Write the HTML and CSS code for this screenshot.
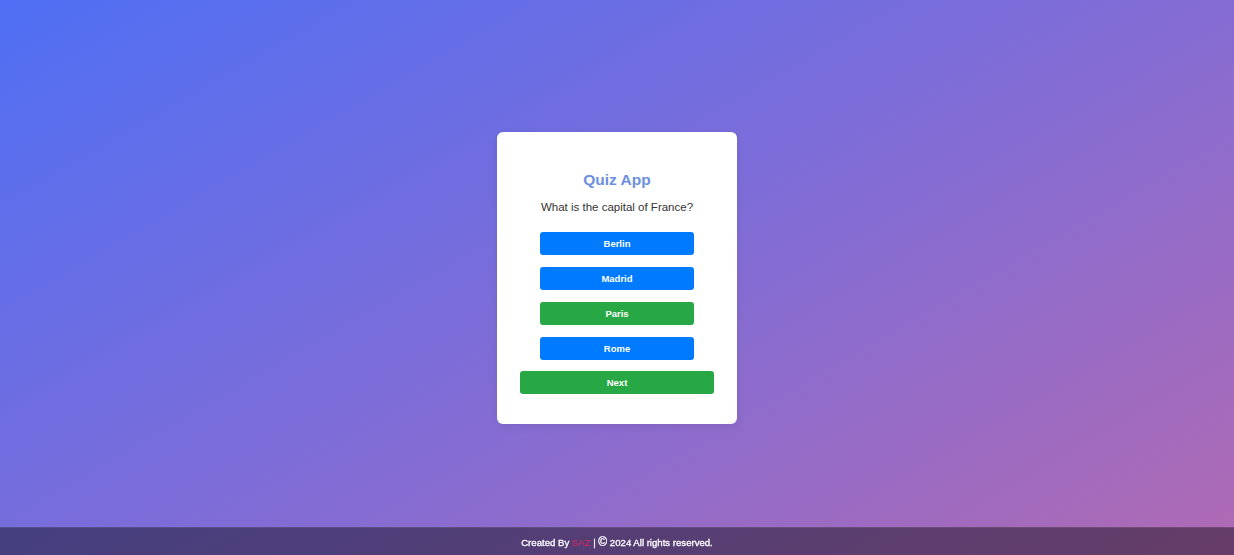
FILE: index.html
```html
<!DOCTYPE html>
<html lang="en">
<head>
<meta charset="UTF-8">
<title>Quiz App</title>
<link rel="stylesheet" href="styles.css">
</head>
<body>
<main class="page">
  <div class="card">
    <h1 class="title">Quiz App</h1>
    <p class="question">What is the capital of France?</p>
    <div class="options">
      <button class="option">Berlin</button>
      <button class="option">Madrid</button>
      <button class="option correct">Paris</button>
      <button class="option">Rome</button>
    </div>
    <button class="next">Next</button>
  </div>
</main>
<footer class="footer">
  Created By <span class="author">SAZ</span> | <span class="copy">©</span> 2024 All rights reserved.
</footer>
</body>
</html>
```

FILE: styles.css
```css
* { box-sizing: border-box; }
html, body { margin: 0; height: 100%; }
body {
  font-family: "Liberation Sans", Arial, sans-serif;
  background: linear-gradient(150deg, #4f6ff4 0%, #7a6ddb 45%, #b06ab3 100%);
  min-height: 555px;
}
.page {
  height: 555px;
  display: flex;
  align-items: center;
  justify-content: center;
}
.card {
  width: 240px;
  background: #fff;
  border-radius: 6px;
  padding: 38px 23px 30px;
  display: flex;
  flex-direction: column;
  align-items: center;
  box-shadow: 0 2px 8px rgba(0,0,0,0.08);
}
.title {
  margin: 0;
  font-size: 15.5px;
  font-weight: bold;
  color: #6c8fe0;
  line-height: 20px;
}
.question {
  margin: 9px 0 17px;
  font-size: 11.5px;
  color: #333;
  line-height: 16px;
}
.options {
  display: flex;
  flex-direction: column;
  gap: 12px;
  width: 154px;
}
.option, .next {
  border: none;
  border-radius: 3px;
  color: #fff;
  font-family: "Liberation Sans", Arial, sans-serif;
  font-size: 9.5px;
  font-weight: bold;
  height: 23px;
  padding: 0;
  background: #007bff;
}
.option.correct, .next { background: #28a745; }
.next {
  width: 194px;
  margin-top: 11px;
}
.footer {
  height: 28px;
  line-height: 28px;
  background: rgba(0,0,0,0.42);
  border-top: 1px solid rgba(255,255,255,0.08);
  color: #fff;
  font-size: 9.6px;
  font-weight: normal;
  -webkit-text-stroke: 0.3px #fff;
  text-align: center;
  position: fixed;
  left: 0;
  right: 0;
  bottom: 0;
}
.author { color: #e0245e; -webkit-text-stroke: 0; }
.copy { font-size: 12px; }
```
